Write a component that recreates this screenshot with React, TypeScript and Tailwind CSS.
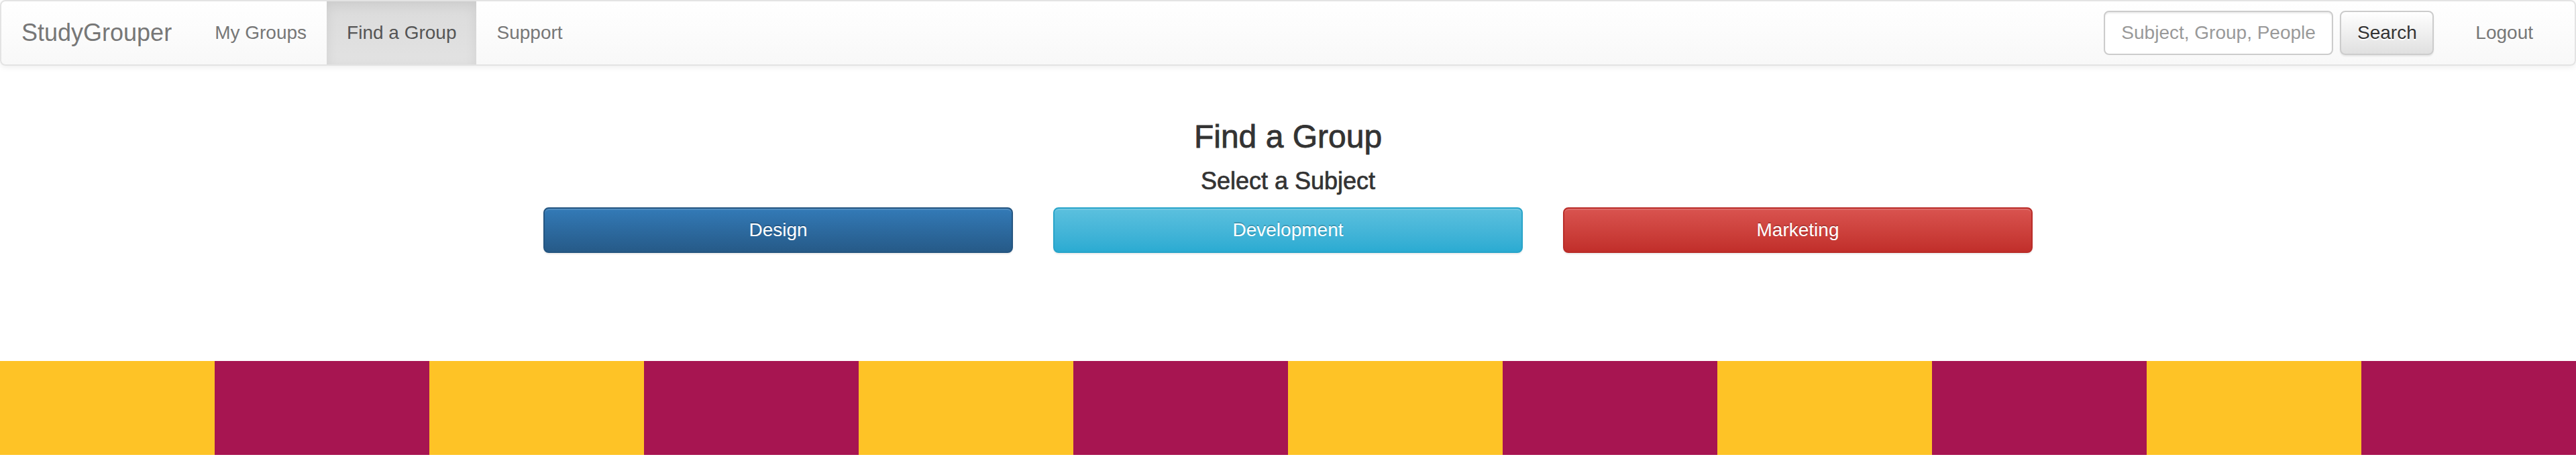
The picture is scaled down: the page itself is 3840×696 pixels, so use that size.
import React from "react";

const NAV_LINKS = ["My Groups", "Find a Group", "Support"];

const SUBJECTS = [
  {
    label: "Design",
    className:
      "from-[#337ab7] to-[#265a88] border-[#245580]",
  },
  {
    label: "Development",
    className:
      "from-[#5bc0de] to-[#2aabd2] border-[#28a4c9]",
  },
  {
    label: "Marketing",
    className:
      "from-[#d9534f] to-[#c12e2a] border-[#b92c28]",
  },
];

export default function App() {
  return (
    <div className="min-h-screen bg-white text-[#333] font-['Liberation_Sans',Arial,sans-serif]">
      {/* Navbar */}
      <nav className="flex h-[98px] items-stretch justify-between rounded-lg border-2 border-[#e3e3e3] bg-linear-to-b from-white to-[#f8f8f8] shadow-[inset_0_2px_0_rgba(255,255,255,0.15),0_2px_10px_rgba(0,0,0,0.075)]">
        <div className="flex items-stretch">
          <a className="flex items-center pl-[30px] pr-[34px] text-[36px] text-[#777]">StudyGrouper</a>
          {NAV_LINKS.map((link) =>
            link === "Find a Group" ? (
              <a
                key={link}
                className="flex items-center px-[30px] text-[28px] text-[#555] bg-linear-to-b from-[#dbdbdb] to-[#e2e2e2] shadow-[inset_0_6px_18px_rgba(0,0,0,0.075)]"
              >
                {link}
              </a>
            ) : (
              <a key={link} className="flex items-center px-[30px] text-[28px] text-[#777]">
                {link}
              </a>
            )
          )}
        </div>

        <div className="flex items-center">
          <div className="flex items-center gap-[10px]">
            <input
              type="text"
              placeholder="Subject, Group, People"
              className="h-[66px] w-[342px] rounded-lg border-2 border-[#ccc] bg-white px-[24px] text-[28px] text-[#555] placeholder-[#999] shadow-[inset_0_2px_2px_rgba(0,0,0,0.075)] focus:outline-none"
            />
            <button className="h-[66px] w-[140px] rounded-lg border-2 border-[#ccc] bg-linear-to-b from-white to-[#e0e0e0] text-[28px] text-[#333] [text-shadow:0_2px_0_#fff] shadow-[inset_0_2px_0_rgba(255,255,255,0.15),0_2px_2px_rgba(0,0,0,0.075)]">
              Search
            </button>
          </div>
          <a className="ml-[32px] mr-[32px] flex items-center px-[30px] text-[28px] text-[#777]">
            Logout
          </a>
        </div>
      </nav>

      {/* Subject picker */}
      <main className="mt-[80px] flex flex-col items-center">
        <h3 className="text-[48px] font-medium leading-[1.1] [-webkit-text-stroke:0.8px_#333]">Find a Group</h3>
        <h4 className="mt-[19px] text-[36px] font-medium leading-[1.1] [-webkit-text-stroke:0.7px_#333]">Select a Subject</h4>
        <div className="mt-[20px] flex gap-[60px]">
          {SUBJECTS.map((s) => (
            <button
              key={s.label}
              className={`h-[68px] w-[700px] rounded-lg border-2 bg-linear-to-b text-[28px] text-white [text-shadow:0_-2px_0_rgba(0,0,0,0.2)] shadow-[inset_0_2px_0_rgba(255,255,255,0.15),0_2px_2px_rgba(0,0,0,0.075)] ${s.className}`}
            >
              {s.label}
            </button>
          ))}
        </div>
      </main>

      {/* Stripes */}
      <div className="mt-[161px] flex">
        {Array.from({ length: 12 }).map((_, i) => (
          <div
            key={i}
            className={`h-[140px] w-[320px] ${i % 2 === 0 ? "bg-[#fec326]" : "bg-[#a71551]"}`}
          />
        ))}
      </div>
    </div>
  );
}
